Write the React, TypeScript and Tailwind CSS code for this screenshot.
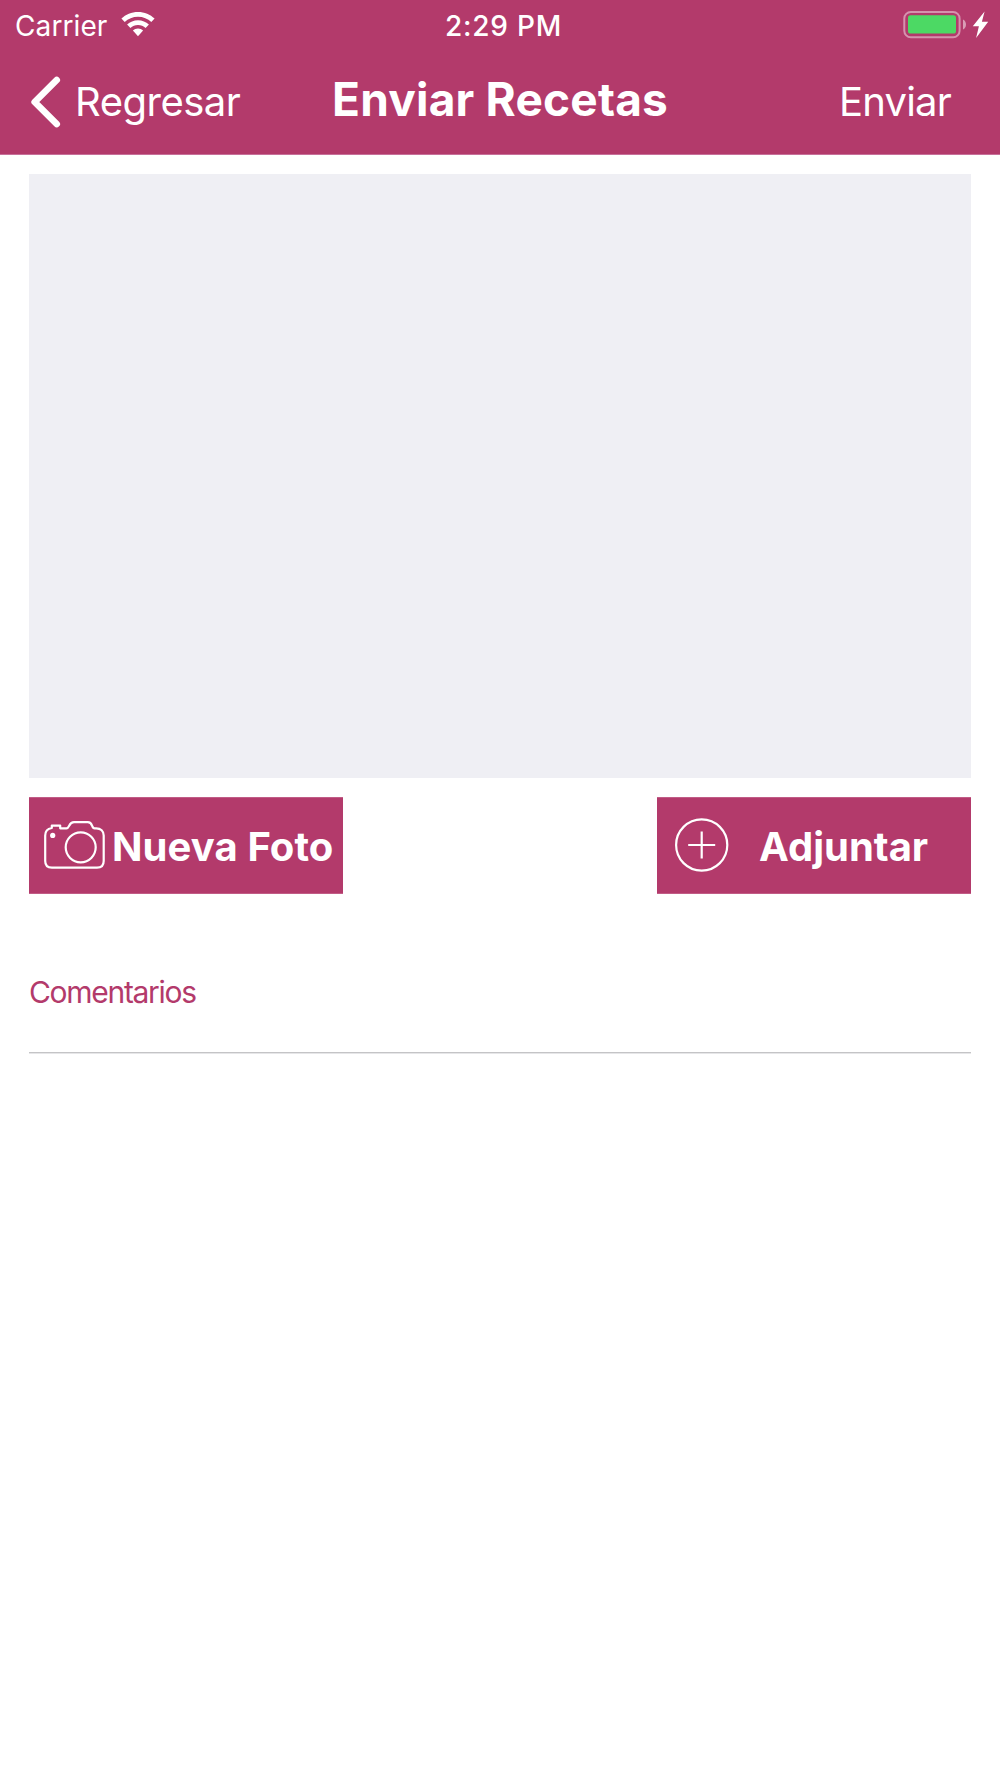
import type { ReactNode } from "react";

function WifiIcon() {
  return (
    <svg aria-hidden="true" viewBox="0 0 34 25" className="h-[25px] w-[34px]" fill="white">
      <path d="M17 0C10.500 0 4.700 2.500 0.400 6.600L3.700 10.100C7.200 6.800 11.800 4.800 17 4.800S26.800 6.800 30.300 10.100L33.600 6.600C29.300 2.500 23.500 0 17 0Z" />
      <path d="M17 8.300C12.800 8.300 9 9.900 6.100 12.600L9.400 16C11.400 14.100 14.100 13 17 13S22.600 14.100 24.600 16L27.900 12.600C25 9.900 21.200 8.300 17 8.300Z" />
      <path d="M17 16.600C15 16.600 13.200 17.400 11.900 18.600L17 24.200L22.100 18.600C20.800 17.400 19 16.600 17 16.600Z" />
    </svg>
  );
}

function BatteryIcon() {
  return (
    <svg aria-hidden="true" viewBox="0 0 86 28" className="h-[28px] w-[86px]">
      <rect x="1.300" y="1" width="55.300" height="25.300" rx="6.500" fill="none" stroke="white" strokeOpacity="0.45" strokeWidth="2" />
      <rect x="5" y="4.200" width="48" height="18.400" rx="2.600" fill="#4cd964" />
      <path d="M60 8.400C61.800 9.200 63 11.200 63 13.500S61.800 17.800 60 18.600Z" fill="white" fillOpacity="0.5" />
      <path d="M81.600 0.400L69.800 15.200H75.900L73.100 27L85.200 10.700H78.900Z" fill="white" />
    </svg>
  );
}

function BackIcon() {
  return (
    <svg
      aria-hidden="true"
      viewBox="0 0 30 52"
      className="h-[52px] w-[30px]"
      fill="none"
      stroke="white"
      strokeWidth="6.700"
      strokeLinecap="round"
      strokeLinejoin="round"
    >
      <path d="M25.700 4L3.700 26L25.700 48" />
    </svg>
  );
}

function CameraIcon() {
  return (
    <svg
      aria-hidden="true"
      viewBox="0 0 62 50"
      className="mb-[2px] h-[50px] w-[62px]"
      fill="none"
      stroke="white"
      strokeWidth="2.200"
      strokeLinejoin="round"
    >
      <path d="M7.800 8V5.600H16.200V8.300H22.500C25.800 8.300 24.600 2.200 30 2.200H43.800C49.200 2.200 47.200 8.300 50.600 8.300H52.200C56.700 8.300 59.700 11.200 59.700 15.600V41C59.700 45.400 57.400 47.700 53 47.700H7.900C3.500 47.700 1.200 45.400 1.200 41V15.600C1.200 11.400 3.600 8.600 7.800 8Z" />
      <circle cx="36.700" cy="27.300" r="15" />
      <circle cx="8.700" cy="15.400" r="2.600" fill="white" stroke="none" />
    </svg>
  );
}

function PlusIcon() {
  return (
    <svg
      aria-hidden="true"
      viewBox="0 0 54 54"
      className="mb-[1px] h-[54px] w-[54px]"
      fill="none"
      stroke="white"
      strokeWidth="2.200"
    >
      <circle cx="26.700" cy="27" r="25.600" />
      <path d="M26.700 13.500V40.500M13.200 27H40.200" />
    </svg>
  );
}

function ActionButton({ className, children }: { className: string; children: ReactNode }) {
  return (
    <button
      type="button"
      className={`flex h-[97px] w-[314px] items-center border-y border-[#c15c86] bg-[#b33a6b] text-[40px] font-bold text-white ${className}`}
    >
      {children}
    </button>
  );
}

function StatusBar() {
  return (
    <div className="grid h-[50px] grid-cols-3 text-[28px] leading-[52px]">
      <div className="flex pl-[15px]">
        <span className="tracking-[0.1px]">Carrier</span>
        <span className="ml-[14px] pt-[12px]">
          <WifiIcon />
        </span>
      </div>
      <div className="pl-[7px] text-center font-medium tracking-[0.8px]">2:29 PM</div>
      <div className="flex justify-end pt-[11px] pr-[11px]">
        <BatteryIcon />
      </div>
    </div>
  );
}

function NavBar() {
  return (
    <div className="flex h-[104px] justify-between text-[40px] leading-[104px]">
      <button type="button" className="flex w-[300px] items-center pl-[31px]">
        <BackIcon />
        <span className="ml-[14px] tracking-[-0.5px]">Regresar</span>
      </button>
      <h1 className="text-[46px] leading-[98px] font-bold tracking-[0.2px] whitespace-nowrap">Enviar Recetas</h1>
      <button type="button" className="w-[300px] pr-[49px] text-right tracking-[-0.8px]">
        Enviar
      </button>
    </div>
  );
}

export default function App() {
  return (
    <div className="h-[1778px] w-[1000px] overflow-hidden bg-white font-['Inter','Liberation_Sans',sans-serif]">
      <header className="h-[155px] border-b border-[#c8709a] bg-[#b33a6b] text-white">
        <StatusBar />
        <NavBar />
      </header>
      <main className="px-[29px] pt-[19px]">
        <div className="h-[604px] bg-[#efeff4]" />
        <div className="mt-[19px] flex justify-between">
          <ActionButton className="pl-[15px]">
            <CameraIcon />
            <span className="ml-[6px] pt-[2px] tracking-[0.1px] whitespace-nowrap">Nueva Foto</span>
          </ActionButton>
          <ActionButton className="pl-[18px]">
            <PlusIcon />
            <span className="ml-[30px] pt-[2px]">Adjuntar</span>
          </ActionButton>
        </div>
        <div className="mt-[38px] h-[120px] text-[30px] leading-[121px] tracking-[-1.3px] text-[#b33a6b]">
          Comentarios
        </div>
        <div className="h-[2px] border-t border-[#c4c4c6] bg-[#e6e6e8]" />
      </main>
    </div>
  );
}
